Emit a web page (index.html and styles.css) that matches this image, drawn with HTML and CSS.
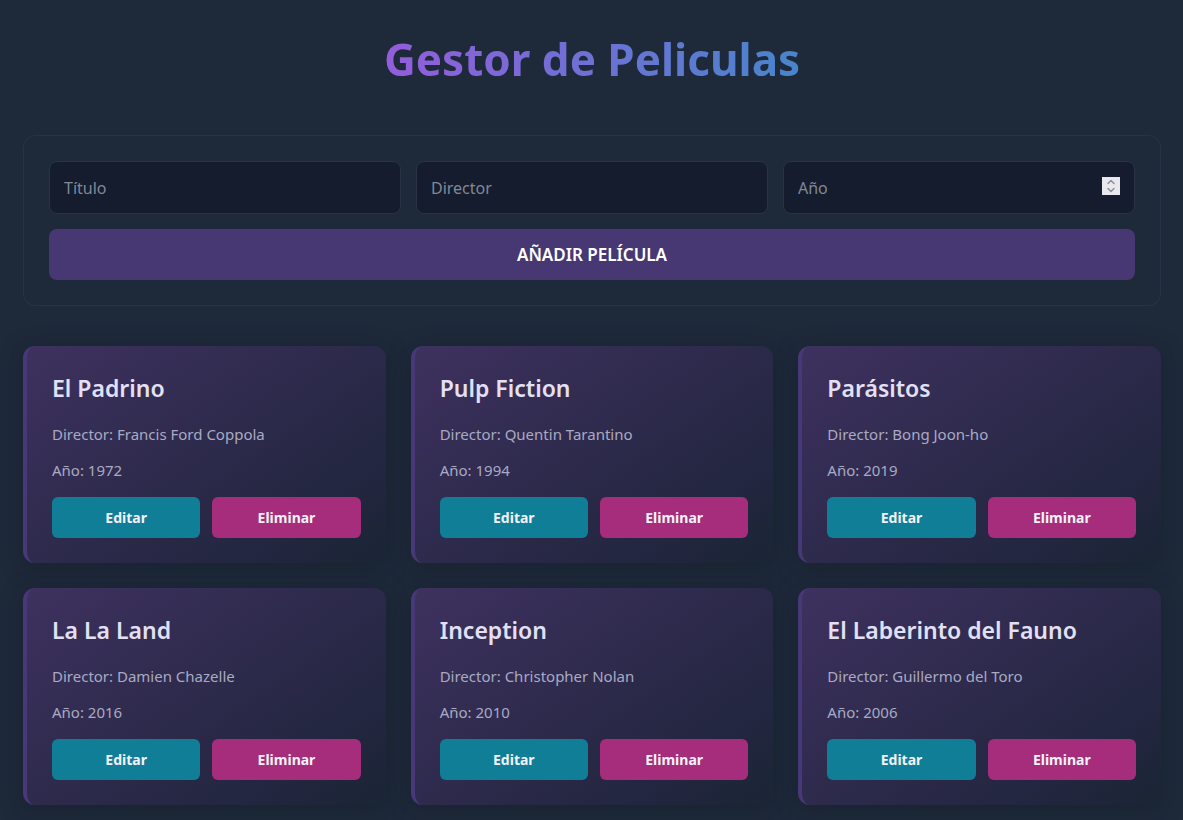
FILE: index.html
```html
<!DOCTYPE html>
<html lang="es">
<head>
<meta charset="utf-8">
<meta name="viewport" content="width=device-width, initial-scale=1">
<title>Gestor de Peliculas</title>
<link rel="stylesheet" href="styles.css">
</head>
<body>
<main class="page">
  <h1 class="page-title">Gestor de Peliculas</h1>
  <form class="movie-form">
    <input class="field" type="text" placeholder="Título" aria-label="Título">
    <input class="field" type="text" placeholder="Director" aria-label="Director">
    <input class="field" type="number" placeholder="Año" aria-label="Año">
    <button class="submit" type="button">Añadir película</button>
  </form>
  <section class="movies" aria-label="Películas">
    <article class="card">
      <h2 class="card-title">El Padrino</h2>
      <p class="card-text">Director: Francis Ford Coppola</p>
      <p class="card-text">Año: 1972</p>
      <div class="actions"><button class="btn edit" type="button">Editar</button><button class="btn delete" type="button">Eliminar</button></div>
    </article>
    <article class="card">
      <h2 class="card-title">Pulp Fiction</h2>
      <p class="card-text">Director: Quentin Tarantino</p>
      <p class="card-text">Año: 1994</p>
      <div class="actions"><button class="btn edit" type="button">Editar</button><button class="btn delete" type="button">Eliminar</button></div>
    </article>
    <article class="card">
      <h2 class="card-title">Parásitos</h2>
      <p class="card-text">Director: Bong Joon-ho</p>
      <p class="card-text">Año: 2019</p>
      <div class="actions"><button class="btn edit" type="button">Editar</button><button class="btn delete" type="button">Eliminar</button></div>
    </article>
    <article class="card">
      <h2 class="card-title">La La Land</h2>
      <p class="card-text">Director: Damien Chazelle</p>
      <p class="card-text">Año: 2016</p>
      <div class="actions"><button class="btn edit" type="button">Editar</button><button class="btn delete" type="button">Eliminar</button></div>
    </article>
    <article class="card">
      <h2 class="card-title">Inception</h2>
      <p class="card-text">Director: Christopher Nolan</p>
      <p class="card-text">Año: 2010</p>
      <div class="actions"><button class="btn edit" type="button">Editar</button><button class="btn delete" type="button">Eliminar</button></div>
    </article>
    <article class="card">
      <h2 class="card-title">El Laberinto del Fauno</h2>
      <p class="card-text">Director: Guillermo del Toro</p>
      <p class="card-text">Año: 2006</p>
      <div class="actions"><button class="btn edit" type="button">Editar</button><button class="btn delete" type="button">Eliminar</button></div>
    </article>
  </section>
</main>
</body>
</html>
```
FILE: styles.css
```css
* { box-sizing: border-box; }

body {
  margin: 0;
  min-height: 100vh;
  background: #1e293a;
  color: #e2e0f5;
  font-family: "Noto Sans", sans-serif;
  font-size: 16px;
}

.page { padding: 29px 22px 14px 23px; }

.page-title {
  width: fit-content;
  margin: 0 auto 46px;
  padding: 0;
  font-size: 44px;
  line-height: 60px;
  font-weight: 700;
  background: linear-gradient(90deg, #935ddc, #4885cc);
  -webkit-background-clip: text;
  background-clip: text;
  color: transparent;
}

.movie-form {
  display: grid;
  grid-template-columns: repeat(3, minmax(0, 1fr));
  gap: 15px;
  padding: 25px;
  margin-bottom: 40px;
  border: 1px solid #283345;
  border-radius: 12px;
}

.field {
  width: 100%;
  height: 53px;
  padding: 14px;
  border: 1px solid #283345;
  border-radius: 8px;
  background: #141c2e;
  color: #e2e0f5;
  font: inherit;
}

.field::placeholder { color: #818896; }

.field::-webkit-inner-spin-button {
  -webkit-appearance: none;
  appearance: none;
  width: 18px;
  height: 18px;
  opacity: 1;
  background: #e9e9ed url("data:image/svg+xml,%3Csvg xmlns='http://www.w3.org/2000/svg' width='18' height='18' fill='none' stroke='%238f8f9d' stroke-width='1.5' stroke-linecap='round' stroke-linejoin='round'%3E%3Cpath d='M6 6.5l3-3 3 3M6 11.5l3 3 3-3'/%3E%3C/svg%3E") center no-repeat;
}

.submit {
  grid-column: 1 / -1;
  padding: 14px;
  border: 0;
  border-radius: 8px;
  background: #473873;
  color: #ffffff;
  font: inherit;
  font-size: 17px;
  line-height: 23px;
  font-weight: 650;
  text-transform: uppercase;
}

.movies {
  display: grid;
  grid-template-columns: repeat(3, minmax(0, 1fr));
  gap: 25px;
}

.card {
  padding: 25px;
  border-left: 4px solid #473877;
  border-radius: 12px;
  background: linear-gradient(145deg, #3e315f, #22263f 80%, #1a2534);
  box-shadow: 0 4px 20px rgba(20, 28, 40, 0.5);
}

.card-title {
  margin: 0 0 17px;
  font-size: 23px;
  line-height: 34px;
  font-weight: 650;
}

.card-text {
  margin: 0 0 12px;
  color: #a9aac4;
  font-size: 15px;
  line-height: 24px;
}

.actions {
  display: grid;
  grid-template-columns: 1fr 1fr;
  gap: 12px;
  padding-top: 3px;
}

.btn {
  padding: 10px;
  border: 0;
  border-radius: 6px;
  color: #f4f2fa;
  font: inherit;
  font-size: 14px;
  line-height: 21px;
  font-weight: 700;
}

.edit { background: #117e98; }
.delete { background: #a62d7b; }
```
